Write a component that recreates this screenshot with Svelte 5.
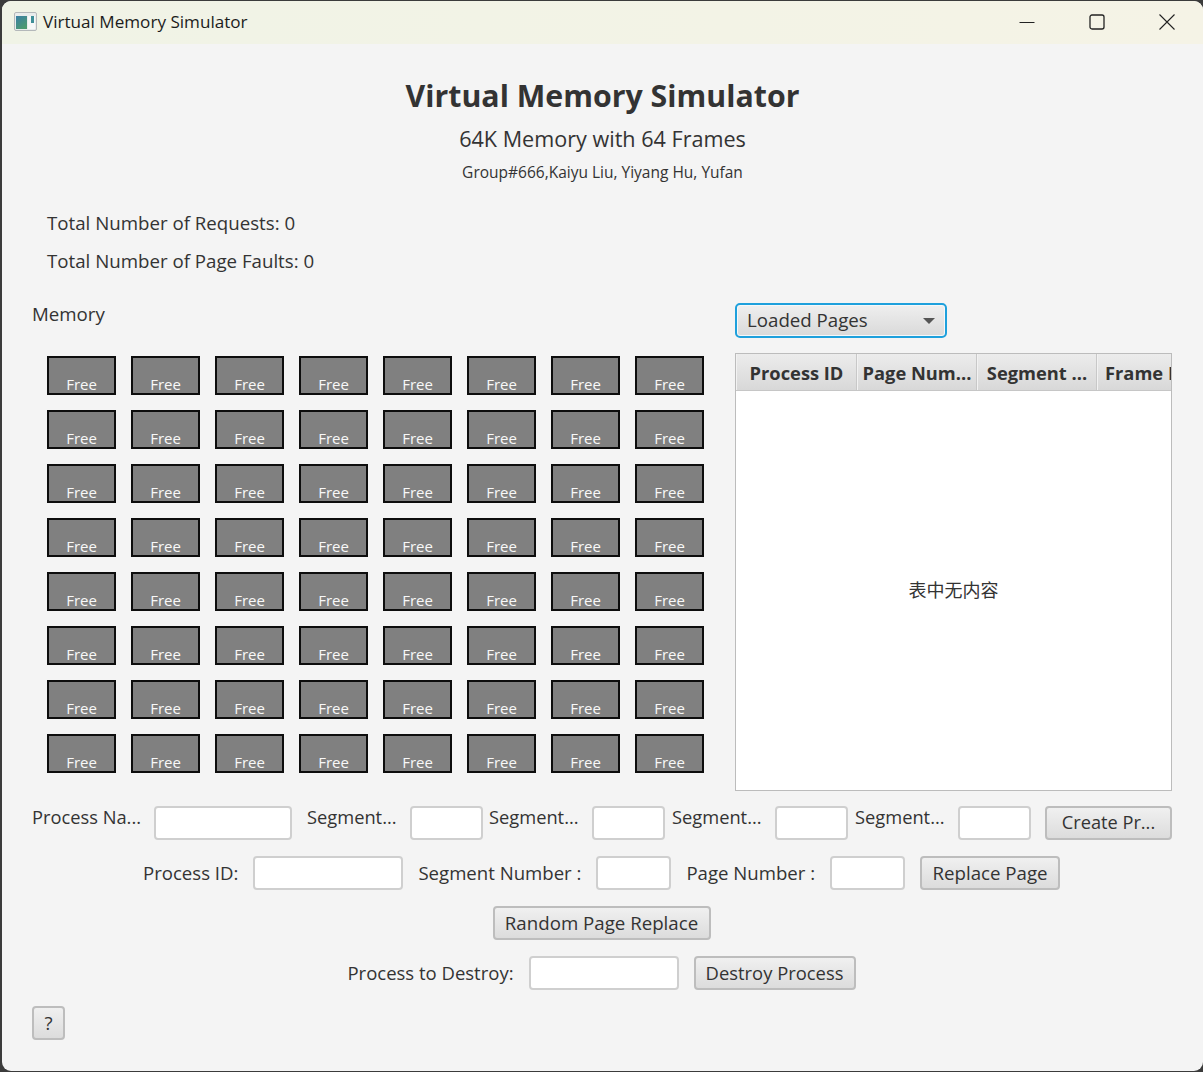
<script>
	const frames = Array.from({ length: 64 }, (_, i) => i);
	const columns = [
		{ name: 'Process ID', width: 121 },
		{ name: 'Page Num...', width: 120 },
		{ name: 'Segment ...', width: 120 },
		{ name: 'Frame I', width: 75 }
	];
	const segments = [
		{ left: 15, label: 103 },
		{ left: 6, label: 103 },
		{ left: 7, label: 103 },
		{ left: 7, label: 103 }
	];
</script>

<div class="window">
	<header class="titlebar">
		<svg class="app-icon" width="24" height="20" viewBox="0 0 24 20">
			<defs>
				<linearGradient id="pane" x1="0" y1="0" x2="0.6" y2="1">
					<stop offset="0" stop-color="#3a7fa6" />
					<stop offset="1" stop-color="#4c9a70" />
				</linearGradient>
			</defs>
			<rect x="0.5" y="0.5" width="22" height="18" rx="1.5" fill="#e9ecec" stroke="#b4b8ba" />
			<rect x="2" y="4" width="11" height="13" fill="url(#pane)" />
			<rect x="14" y="4" width="7" height="13" fill="#f6f8f8" />
			<rect x="17" y="4" width="3" height="7" fill="#3f8f98" />
		</svg>
		<span class="window-title">Virtual Memory Simulator</span>
		<div class="controls">
			<svg width="16" height="16" viewBox="0 0 16 16"><path d="M0.5 8.5h15" stroke="#222" fill="none" /></svg>
			<svg width="16" height="16" viewBox="0 0 16 16"><rect x="1" y="1" width="14" height="14" rx="2" stroke="#222" stroke-width="1.3" fill="none" /></svg>
			<svg width="16" height="16" viewBox="0 0 16 16"><path d="M0.5 0.5l15 15M15.5 0.5l-15 15" stroke="#222" stroke-width="1.1" fill="none" /></svg>
		</div>
	</header>

	<main class="content">
		<section class="heading">
			<h1>Virtual Memory Simulator</h1>
			<h2>64K Memory with 64 Frames</h2>
			<p>Group#666,Kaiyu Liu, Yiyang Hu, Yufan</p>
		</section>

		<section class="stats">
			<div>Total Number of Requests: 0</div>
			<div>Total Number of Page Faults: 0</div>
		</section>

		<section class="panels">
			<div class="memory">
				<div class="memory-label">Memory</div>
				<div class="frames">
					{#each frames as f (f)}
						<div class="frame">Free</div>
					{/each}
				</div>
			</div>

			<div class="side">
				<div class="select">
					<span>Loaded Pages</span>
					<i class="caret"></i>
				</div>
				<div class="table">
					<div class="thead">
						{#each columns as c}
							<div class="th" style="width: {c.width}px">{c.name}</div>
						{/each}
					</div>
					<div class="tbody">表中无内容</div>
				</div>
			</div>
		</section>

		<section class="row first">
			<span class="label name-label">Process Na...</span>
			<input class="field name-field" />
			{#each segments as s}
				<span class="label seg-label" style="margin-left: {s.left}px; width: {s.label}px">Segment...</span>
				<input class="field seg-field" />
			{/each}
			<button class="create">Create Pr...</button>
		</section>

		<section class="row centered">
			<span class="text replace-label">Process ID:</span>
			<input class="field wide" />
			<span class="text replace-label">Segment Number :</span>
			<input class="field small" />
			<span class="text replace-label">Page Number :</span>
			<input class="field small" />
			<button class="replace">Replace Page</button>
		</section>

		<section class="row centered">
			<button class="random">Random Page Replace</button>
		</section>

		<section class="row centered">
			<span class="text destroy-label">Process to Destroy:</span>
			<input class="field wide" />
			<button class="destroy">Destroy Process</button>
		</section>

		<section class="row">
			<button class="help">?</button>
		</section>
	</main>
</div>

<style>
	:global(body) {
		background: #3b3b3b;
	}

	.window {
		margin: 1px 0 0 2px;
		height: 1070px;
		width: 1201px;
		background: #f4f4f4;
		border-radius: 9px;
		overflow: hidden;
		color: #333;
		font-family: 'Open Sans', 'Noto Sans CJK SC', sans-serif;
		font-size: 18.7px;
	}

	.titlebar {
		height: 43px;
		display: flex;
		align-items: center;
		padding: 0 0 2px 12px;
		background: linear-gradient(to right, #f0f3e6, #f5f3e6);
		color: #1c1c1c;
		box-sizing: border-box;
	}

	.app-icon {
		margin-right: 5px;
	}

	.window-title {
		font-size: 17.1px;
	}

	.controls {
		margin-left: auto;
		display: flex;
		gap: 54px;
		padding-right: 28px;
	}

	.content {
		padding: 0 30px;
	}

	.heading {
		text-align: center;
		padding-top: 30px;
	}

	h1 {
		margin: 0;
		font-size: 30.3px;
		line-height: 44px;
		font-weight: 700;
	}

	h2 {
		margin: -1px 0 0;
		font-size: 21.6px;
		font-weight: 400;
		line-height: 44px;
	}

	.heading p {
		margin: 1px 0 0;
		font-size: 15.5px;
		line-height: 20px;
	}

	.stats {
		padding: 28px 0 0 15px;
		display: flex;
		flex-direction: column;
		gap: 13px;
		line-height: 25px;
	}

	.panels {
		display: flex;
		margin-top: 29px;
		height: 489px;
	}

	.memory {
		width: 703px;
	}

	.memory-label {
		line-height: 24px;
	}

	.frames {
		display: grid;
		grid-template-columns: repeat(8, 69px);
		grid-auto-rows: 39px;
		gap: 15px;
		margin: 30px 0 0 15px;
	}

	.frame {
		box-sizing: border-box;
		background: #808080;
		border: 2px solid #0d0d0d;
		color: #f8f8f8;
		font-size: 15px;
		line-height: 20px;
		text-align: center;
		padding-top: 16px;
		overflow: hidden;
	}

	.select {
		box-sizing: border-box;
		width: 212px;
		height: 35px;
		margin-top: 1px;
		display: flex;
		align-items: center;
		justify-content: space-between;
		padding: 0 10px 2px;
		border: 2px solid #1ea0dc;
		border-radius: 5px;
		background: linear-gradient(#efefef, #d9d9d9);
		box-shadow: inset 0 0 0 1px #f4f8fa;
	}

	.caret {
		width: 0;
		height: 0;
		margin-top: 2px;
		border-left: 6px solid transparent;
		border-right: 6px solid transparent;
		border-top: 6px solid #555;
	}

	.table {
		box-sizing: border-box;
		width: 437px;
		height: 438px;
		margin-top: 15px;
		border: 1px solid #bcbcbc;
		background: #fff;
		display: flex;
		flex-direction: column;
		overflow: hidden;
	}

	.thead {
		display: flex;
		height: 37px;
		flex-shrink: 0;
		background: linear-gradient(#ececec, #d8d8d8);
		border-bottom: 1px solid #c6c6c6;
		box-sizing: border-box;
	}

	.th {
		box-sizing: border-box;
		flex-shrink: 0;
		border-right: 1px solid #c8c8c8;
		border-left: 1px solid #f2f2f2;
		font-weight: 700;
		font-size: 18.3px;
		line-height: 38px;
		text-align: center;
		white-space: nowrap;
		overflow: hidden;
	}

	.th:last-child {
		text-align: left;
		padding-left: 7px;
		border-right: 0;
	}

	.tbody {
		flex: 1;
		display: flex;
		align-items: center;
		justify-content: center;
		color: #333;
		padding-bottom: 3px;
		font-size: 18px;
	}

	.row {
		display: flex;
		align-items: center;
		height: 34px;
		margin-top: 16px;
	}

	.row.first {
		margin-top: 15px;
		align-items: flex-start;
	}

	.row.centered {
		justify-content: center;
		gap: 15px;
		margin-left: -2px;
	}

	.label {
		font-size: 18.3px;
		line-height: 20px;
		padding-top: 1px;
		white-space: nowrap;
	}

	.text {
		padding-bottom: 2px;
	}

	.replace-label {
		font-size: 18.6px;
	}

	.destroy-label {
		font-size: 18.5px;
	}

	.name-label {
		width: 122px;
	}

	.field {
		box-sizing: border-box;
		height: 34px;
		padding: 0;
		margin: 0;
		border: 2px solid #cfcfcf;
		border-radius: 4px;
		background: #fff;
		outline: none;
	}

	.name-field {
		width: 138px;
	}

	.seg-field {
		width: 73px;
	}

	.wide {
		width: 150px;
	}

	.small {
		width: 75px;
	}

	button {
		box-sizing: border-box;
		height: 34px;
		padding: 0 0 2px;
		border: 2px solid #bdbdbd;
		border-radius: 4px;
		background: linear-gradient(#f0f0f0, #dcdcdc);
		color: #333;
		font: inherit;
		white-space: nowrap;
	}

	.replace {
		width: 140px;
	}

	.random {
		width: 218px;
	}

	.destroy {
		width: 162px;
		font-size: 18.4px;
	}

	.create {
		width: 127px;
		margin-left: 14px;
		font-size: 18.2px;
	}

	.help {
		width: 33px;
	}
</style>
